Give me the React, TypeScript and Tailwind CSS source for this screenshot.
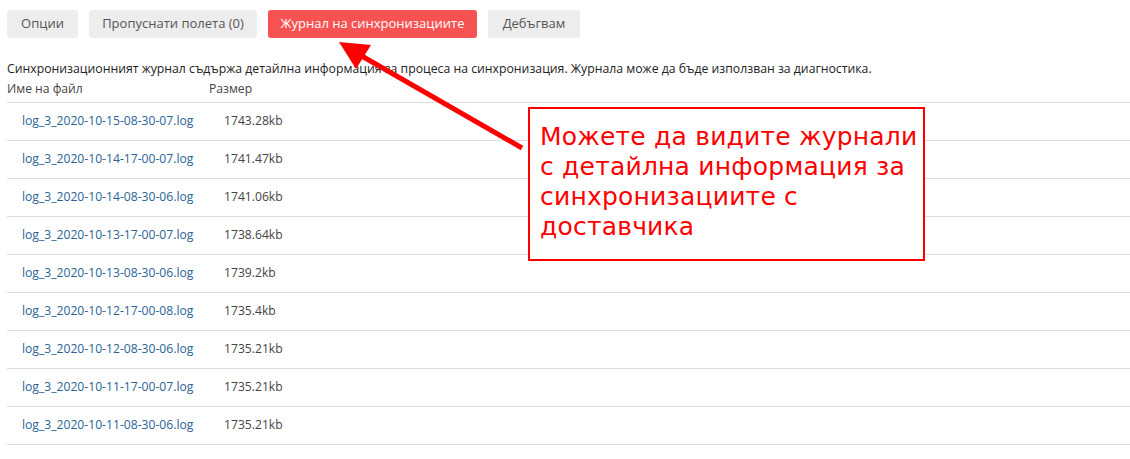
// Sync log tab: button row, description, file table and a red callout.

const logs = [
  { name: "log_3_2020-10-15-08-30-07.log", size: "1743.28kb" },
  { name: "log_3_2020-10-14-17-00-07.log", size: "1741.47kb" },
  { name: "log_3_2020-10-14-08-30-06.log", size: "1741.06kb" },
  { name: "log_3_2020-10-13-17-00-07.log", size: "1738.64kb" },
  { name: "log_3_2020-10-13-08-30-06.log", size: "1739.2kb" },
  { name: "log_3_2020-10-12-17-00-08.log", size: "1735.4kb" },
  { name: "log_3_2020-10-12-08-30-06.log", size: "1735.21kb" },
  { name: "log_3_2020-10-11-17-00-07.log", size: "1735.21kb" },
  { name: "log_3_2020-10-11-08-30-06.log", size: "1735.21kb" },
];

const tabs = [
  { label: "Опции", active: false, w: "w-[71px]" },
  { label: "Пропуснати полета (0)", active: false, w: "w-[168px]" },
  { label: "Журнал на синхронизациите", active: true, w: "w-[209px]" },
  { label: "Дебъгвам", active: false, w: "w-[92px]" },
];

const calloutLines = [
  "Можете да видите журнали",
  "с детайлна информация за",
  "синхронизациите с",
  "доставчика",
];

export default function App() {
  return (
    <div className="relative h-[459px] w-[1130px] overflow-hidden bg-white pl-[7px] font-['Open_Sans',sans-serif]">
      <div className="flex gap-[11px] pt-[10px]">
        {tabs.map((t) => (
          <button
            key={t.label}
            className={
              t.w +
              (t.active
                ? " h-[28px] rounded-[3px] bg-[#f65252] text-[13px] text-white"
                : " h-[28px] rounded-[3px] bg-[#ededed] text-[13px] text-[#555]")
            }
          >
            {t.label}
          </button>
        ))}
      </div>

      <p className="mt-[22px] text-[12.25px] leading-[17px] text-[#222]">
        Синхронизационният журнал съдържа детайлна информация за процеса на синхронизация. Журнала може да бъде използван за диагностика.
      </p>

      <div className="flex h-[26px] items-center border-b border-[#ddd] text-[12.15px] text-[#444]">
        <div className="w-[202px]">Име на файл</div>
        <div>Размер</div>
      </div>
      {logs.map((l) => (
        <div key={l.name} className="flex h-[38px] items-center border-b border-[#ddd] text-[12.15px]">
          <div className="w-[202px] pl-[15px]">
            <a href="#" className="text-[#2a6496]">{l.name}</a>
          </div>
          <div className="pl-[15px] text-[#444]">{l.size}</div>
        </div>
      ))}

      <svg className="pointer-events-none absolute left-0 top-0" width="1130" height="459">
        <line x1="522" y1="148" x2="360" y2="55" stroke="#ff0000" strokeWidth="5" />
        <polygon points="339,42 371,45 356,69" fill="#ff0000" />
      </svg>

      <div className="absolute left-[528px] top-[107px] h-[154px] w-[397px] whitespace-nowrap border-2 border-[#ff0000] bg-white pl-[10px] pt-[13px] font-['DejaVu_Sans',sans-serif] text-[25px] leading-[30px] tracking-[0.2px] text-[#ff0000]">
        {calloutLines.map((line) => (
          <div key={line}>{line}</div>
        ))}
      </div>
    </div>
  );
}
